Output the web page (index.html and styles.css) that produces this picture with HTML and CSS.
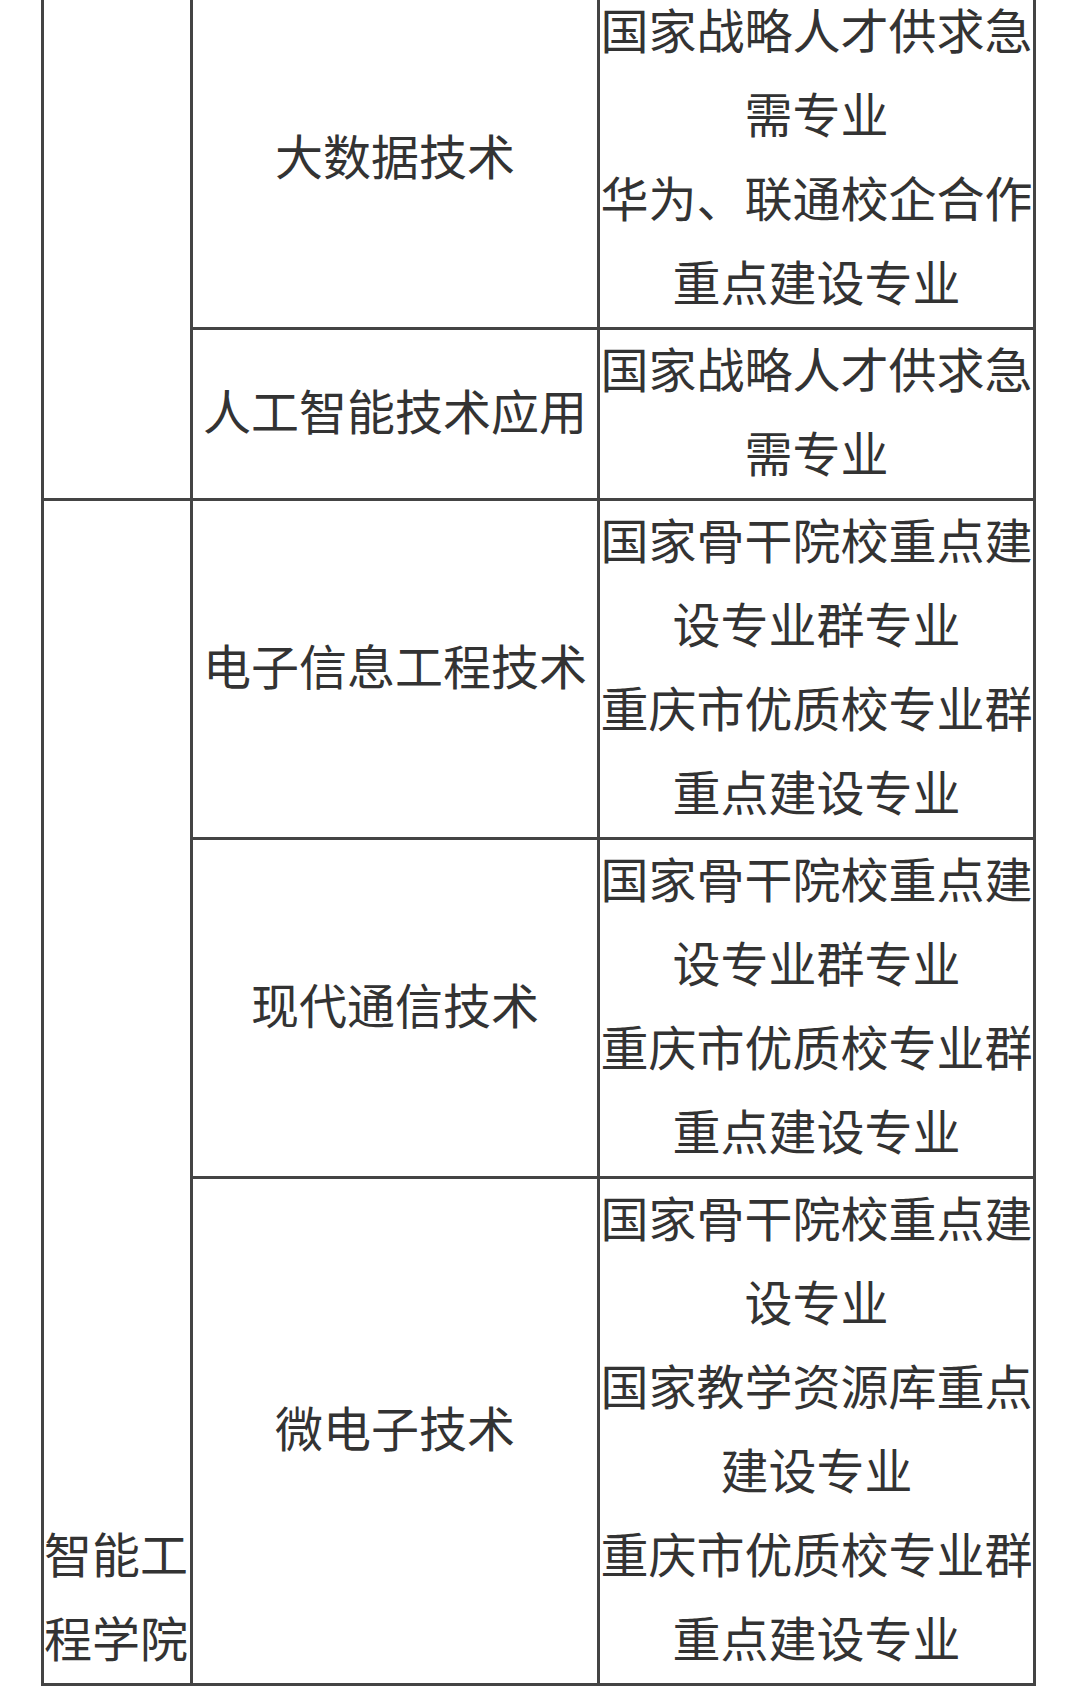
FILE: index.html
```html
<!DOCTYPE html>
<html lang="zh-CN">
<head>
<meta charset="utf-8">
<title>专业列表</title>
<link rel="stylesheet" href="styles.css">
</head>
<body>
<table class="majors">
  <colgroup>
    <col class="c-college">
    <col class="c-major">
    <col class="c-note">
  </colgroup>
  <tbody>
    <tr class="r4">
      <td class="college" rowspan="2"></td>
      <td class="major">大数据技术</td>
      <td class="note">国家战略人才供求急<br>需专业<br>华为、联通校企合作<br>重点建设专业</td>
    </tr>
    <tr class="r2">
      <td class="major">人工智能技术应用</td>
      <td class="note">国家战略人才供求急<br>需专业</td>
    </tr>
    <tr class="r4">
      <td class="college" rowspan="3">智能工<br>程学院</td>
      <td class="major">电子信息工程技术</td>
      <td class="note">国家骨干院校重点建<br>设专业群专业<br>重庆市优质校专业群<br>重点建设专业</td>
    </tr>
    <tr class="r4">
      <td class="major">现代通信技术</td>
      <td class="note">国家骨干院校重点建<br>设专业群专业<br>重庆市优质校专业群<br>重点建设专业</td>
    </tr>
    <tr class="r6">
      <td class="major">微电子技术</td>
      <td class="note">国家骨干院校重点建<br>设专业<br>国家教学资源库重点<br>建设专业<br>重庆市优质校专业群<br>重点建设专业</td>
    </tr>
  </tbody>
</table>
</body>
</html>
```

FILE: styles.css
```css
html, body {
  margin: 0;
  padding: 0;
  background: #ffffff;
}

body {
  font-family: "Liberation Sans", "Noto Sans CJK SC", sans-serif;
  color: #333333;
  overflow: hidden;
}

.majors {
  border-collapse: collapse;
  table-layout: fixed;
  width: 992px;
  margin: -12px 0 0 41px;
  font-size: 48px;
  line-height: 84px;
}

.c-college { width: 149px; }
.c-major { width: 407px; }
.c-note { width: 436px; }

.majors td {
  border: 3px solid #444444;
  padding: 0;
  white-space: nowrap;
  overflow: hidden;
}

.college {
  vertical-align: bottom;
  text-align: left;
  padding-left: 2px;
}

.major {
  vertical-align: middle;
  text-align: center;
}

.note {
  vertical-align: middle;
  text-align: center;
}
```
